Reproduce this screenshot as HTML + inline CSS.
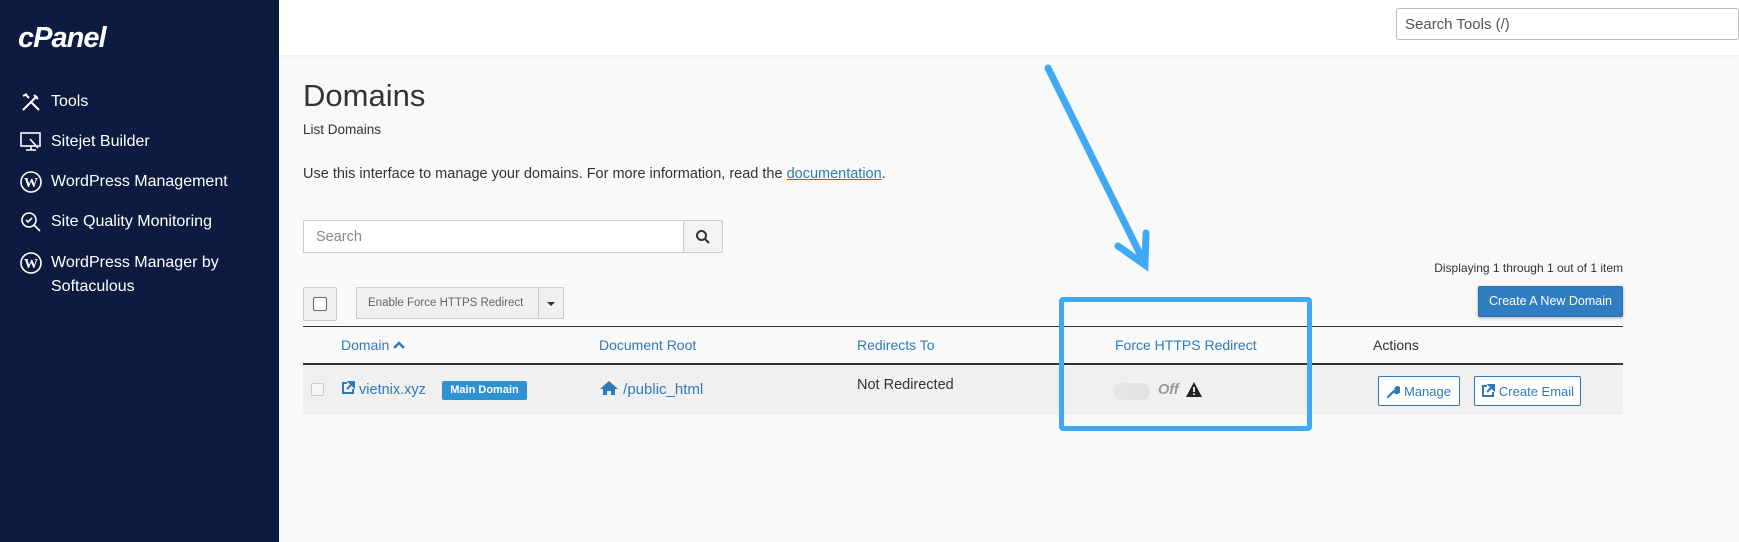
<!DOCTYPE html>
<html><head><meta charset="utf-8"><style>
*{box-sizing:border-box;margin:0;padding:0}
body{width:1739px;height:542px;overflow:hidden;background:#f9f9f9;font-family:"Liberation Sans",sans-serif;color:#333;position:relative}
.abs{position:absolute}
#side{left:0;top:0;width:279px;height:542px;background:#0d1b40}
#hdr{left:279px;top:0;width:1460px;height:55px;background:#fff;box-shadow:0 1px 4px rgba(0,0,0,.06)}
.nav{position:absolute;left:20px;color:#fff;font-size:16px;display:flex;align-items:center}
.nav svg{margin-right:9px}
.lnk{color:#2f7ab9}
.btn{position:absolute;border:1px solid #ccc;background:#f0f0f0;border-radius:2px}
.obtn{position:absolute;border:1px solid #2f7ab9;color:#2f7ab9;background:#fff;font-size:13px;border-radius:2px;display:flex;align-items:center;justify-content:center;gap:4px}
</style></head><body>
<div id="side" class="abs">
<div class="abs" style="left:18px;top:22px;color:#fff;font-size:29px;font-weight:bold;font-style:italic;letter-spacing:-1px">cPanel</div>
<div class="nav" style="top:91px"><svg width="22" height="22" viewBox="0 0 22 22" fill="none" stroke="#fff" stroke-width="2"><path d="M3 19L17 5M14 4l4 4M5 3l4 4M3 5l4-2M19 19L11 11"/></svg>Tools</div>
<div class="nav" style="top:131px"><svg width="22" height="22" viewBox="0 0 22 22" fill="none" stroke="#fff" stroke-width="1.6"><rect x="1" y="2" width="19" height="13"/><path d="M6 19h10M11 15v4M10 8l8 9"/></svg>Sitejet Builder</div>
<div class="nav" style="top:171px"><svg width="22" height="22" viewBox="0 0 22 22"><circle cx="11" cy="11" r="10" fill="none" stroke="#fff" stroke-width="1.6"/><text x="11" y="16" font-size="14" font-weight="bold" fill="#fff" text-anchor="middle" font-family="Liberation Serif">W</text></svg>WordPress Management</div>
<div class="nav" style="top:211px"><svg width="22" height="22" viewBox="0 0 22 22" fill="none" stroke="#fff" stroke-width="1.6"><circle cx="9" cy="9" r="7"/><path d="M6 9l2 2 4-4M14 14l6 6"/></svg>Site Quality Monitoring</div>
<div class="nav" style="top:251px;align-items:flex-start;line-height:24px"><svg width="22" height="22" viewBox="0 0 22 22" style="margin-top:1px"><circle cx="11" cy="11" r="10" fill="none" stroke="#fff" stroke-width="1.6"/><text x="11" y="16" font-size="14" font-weight="bold" fill="#fff" text-anchor="middle" font-family="Liberation Serif">W</text></svg><span>WordPress Manager by<br>Softaculous</span></div>
</div>
<div id="hdr" class="abs"></div>
<div class="abs" style="left:1396px;top:8px;width:343px;height:32px;border:1px solid #bbb;border-radius:3px;background:#fff;font-size:15px;color:#555;padding:7px 8px">Search Tools (/)</div>

<div class="abs" style="left:303px;top:78px;font-size:31px;color:#333">Domains</div>
<div class="abs" style="left:303px;top:122px;font-size:13.5px">List Domains</div>
<div class="abs" style="left:303px;top:166px;font-size:14.5px">Use this interface to manage your domains. For more information, read the <span class="lnk" style="text-decoration:underline">documentation</span>.</div>

<div class="abs" style="left:303px;top:220px;width:381px;height:33px;border:1px solid #ccc;background:#fff;font-size:14.5px;color:#888;padding:8px 12px">Search</div>
<div class="btn" style="left:683px;top:220px;width:40px;height:33px;background:#f3f3f3"><svg width="16" height="16" viewBox="0 0 16 16" style="margin:8px 11px" fill="none" stroke="#333" stroke-width="2"><circle cx="6.5" cy="6.5" r="4.5"/><path d="M10 10l4 4"/></svg></div>

<div class="abs" style="right:116px;top:261px;font-size:12px">Displaying 1 through 1 out of 1 item</div>

<div class="btn" style="left:303px;top:287px;width:34px;height:34px"><div style="width:14px;height:14px;border:1px solid #666;border-radius:2px;background:#fff;margin:9px"></div></div>
<div class="btn" style="left:356px;top:287px;width:208px;height:32px;font-size:11.5px;color:#666;padding:9px 11px;white-space:nowrap">Enable Force HTTPS Redirect</div>
<div class="abs" style="left:538px;top:287px;width:1px;height:32px;background:#ccc"></div>
<div class="abs" style="left:547px;top:302px;border:4px solid transparent;border-top:4px solid #333;border-bottom:0"></div>

<div class="abs" style="left:1478px;top:286px;width:145px;height:31px;background:#2f7ec4;color:#fff;font-size:12.5px;border:1px solid #2a6fae;border-radius:2px;text-align:center;line-height:29px;box-shadow:0 1px 3px rgba(0,0,0,.3)">Create A New Domain</div>

<div class="abs" style="left:303px;top:326px;width:1320px;height:1px;background:#333"></div>
<div class="abs" style="left:303px;top:363px;width:1320px;height:52px;background:#f0f0f0;border-top:2px solid #333"></div>
<div class="abs lnk" style="left:341px;top:337px;font-size:14px">Domain <svg width="12" height="9" viewBox="0 0 12 9"><path d="M1 7l5-5 5 5" stroke="#2f7ab9" stroke-width="2.5" fill="none"/></svg></div>
<div class="abs lnk" style="left:599px;top:337px;font-size:14px">Document Root</div>
<div class="abs lnk" style="left:857px;top:337px;font-size:14px">Redirects To</div>
<div class="abs lnk" style="left:1115px;top:337px;font-size:14px">Force HTTPS Redirect</div>
<div class="abs" style="left:1373px;top:337px;font-size:14px">Actions</div>

<div class="abs" style="left:311px;top:383px;width:13px;height:13px;border:1px solid #ccc;border-radius:2px;background:#f6f6f6"></div>
<div class="abs lnk" style="left:341px;top:381px;font-size:14.5px"><svg width="14" height="14" viewBox="0 0 14 14" style="vertical-align:-1px"><path d="M6 2H2v10h10V8" stroke="#2f7ab9" stroke-width="2" fill="none"/><path d="M8 1h5v5z M12 2L6 8" stroke="#2f7ab9" stroke-width="2" fill="#2f7ab9"/></svg> vietnix.xyz</div>
<div class="abs" style="left:442px;top:381px;width:85px;height:19px;background:#2e93d1;color:#fff;font-size:11px;font-weight:bold;text-align:center;line-height:19px;border-radius:2px">Main Domain</div>
<div class="abs lnk" style="left:599px;top:380px;font-size:15px"><svg width="20" height="16" viewBox="0 0 20 16" style="vertical-align:-2px"><path d="M10 1L1 9h3v6h4v-4h4v4h4V9h3z" fill="#2f7ab9"/></svg> /public_html</div>
<div class="abs" style="left:857px;top:377px;font-size:14.5px">Not Redirected</div>

<div class="abs" style="left:1114px;top:383px;width:36px;height:17px;background:#e3e3e3;border-radius:9px"><div style="width:17px;height:17px;border-radius:50%;background:#e6e6e6;box-shadow:0 0 1px #ccc"></div></div>
<div class="abs" style="left:1158px;top:382px;font-size:14.5px;font-style:italic;font-weight:bold;color:#999">Off</div>
<svg class="abs" style="left:1186px;top:382px" width="16" height="15" viewBox="0 0 16 15"><path d="M8 0L16 15H0z" fill="#222"/><path d="M8 5v5M8 11.5v1.5" stroke="#fff" stroke-width="1.8"/></svg>

<div class="obtn" style="left:1378px;top:376px;width:82px;height:30px"><svg width="13" height="13" viewBox="0 0 13 13"><path d="M1 12l6-6M7 6a3 3 0 1 0 3-4l-1.5 1.5.5 1.5 1.5.5L12 4a3 3 0 0 1-4 3" stroke="#2f7ab9" stroke-width="2.2" fill="#2f7ab9" stroke-linecap="round"/></svg>Manage</div>
<div class="obtn" style="left:1474px;top:376px;width:107px;height:30px"><svg width="14" height="14" viewBox="0 0 14 14"><path d="M6 2H2v10h10V8" stroke="#2f7ab9" stroke-width="2" fill="none"/><path d="M8 1h5v5z M12 2L6 8" stroke="#2f7ab9" stroke-width="2" fill="#2f7ab9"/></svg>Create Email</div>

<div class="abs" style="left:1059px;top:297px;width:253px;height:134px;border:5px solid #3fa9f5;border-radius:4px"></div>
<svg class="abs" style="left:0;top:0" width="1739" height="542"><g stroke="#3fa9f5" stroke-width="7" stroke-linecap="round" fill="none"><path d="M1048 68L1145 264M1118 246L1145 265L1146 233"/></g></svg>
</body></html>
